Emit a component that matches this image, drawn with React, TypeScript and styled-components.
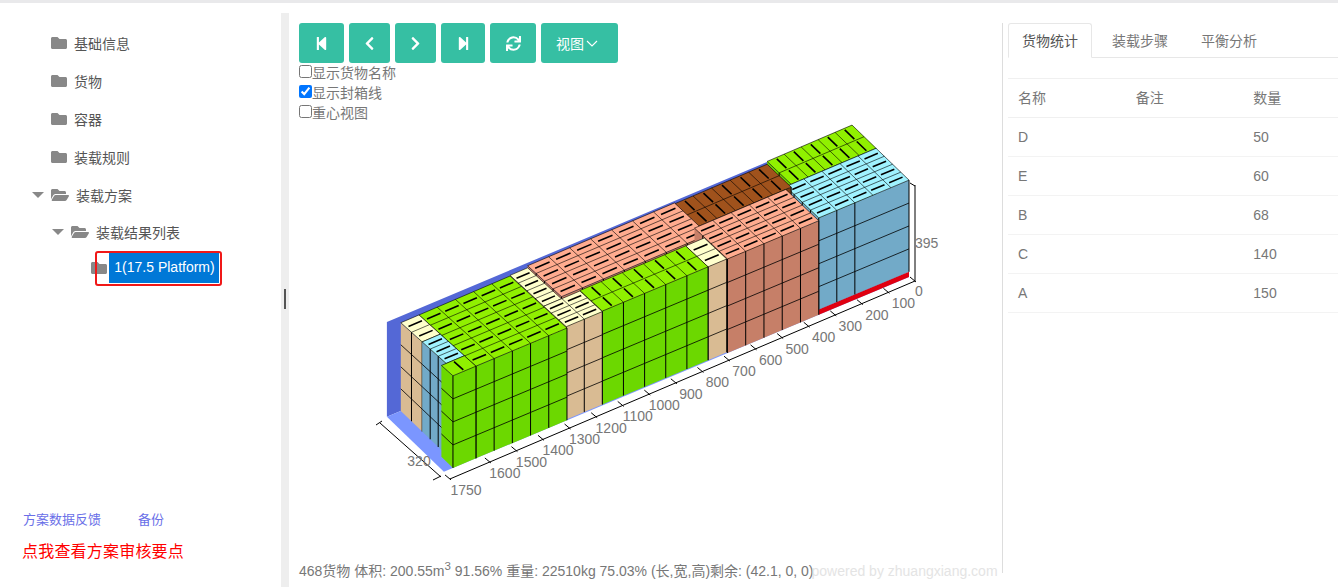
import React from "react";
import styled, { createGlobalStyle } from "styled-components";
import {
  FaChevronLeft,
  FaChevronRight,
  FaFolder,
  FaFolderOpen,
  FaStepBackward,
  FaStepForward,
  FaSync,
} from "react-icons/fa";

const GlobalStyle = createGlobalStyle`
  html, body { margin: 0; padding: 0; background: #fff; }
  body { font-family: "Liberation Sans", "Noto Sans CJK SC", sans-serif; color: #777; }
`;

const Page = styled.div`
  width: 1338px;
  height: 587px;
  overflow: hidden;
  display: flex;
  flex-direction: column;
`;
const TopStripe = styled.div`
  height: 3px;
  flex: none;
  background: #e9e9eb;
`;
const Body = styled.div`
  flex: 1;
  display: flex;
  min-height: 0;
`;
const Sidebar = styled.aside`
  width: 281px;
  flex: none;
  display: flex;
  flex-direction: column;
  padding-top: 21px;
  box-sizing: border-box;
`;
const Tree = styled.ul`
  list-style: none;
  margin: 0;
  padding: 0;
  flex: 1;
`;
const TreeRow = styled.li<{ $indent: number; $h: number }>`
  position: relative;
  height: ${(p) => p.$h}px;
  display: flex;
  align-items: center;
  padding-left: ${(p) => p.$indent}px;
  font-size: 14px;
  color: #555;
`;
const Caret = styled.span`
  width: 0;
  height: 0;
  border-left: 6px solid transparent;
  border-right: 6px solid transparent;
  border-top: 6px solid #888;
  margin-right: 7px;
`;
const FolderWrap = styled.span<{ $w: number }>`
  width: ${(p) => p.$w}px;
  display: inline-flex;
  color: #888;
  font-size: ${(p) => p.$w}px;
  margin-right: 7px;
`;
const SelectedLabel = styled.span`
  position: absolute;
  left: 109px;
  top: 4px;
  width: 110px;
  height: 30px;
  background: #0078d7;
  color: #fff;
  font-size: 14px;
  line-height: 29px;
  text-align: center;
  box-sizing: border-box;
  padding-left: 1px;
`;
const SelectedOutline = styled.span`
  position: absolute;
  left: 95px;
  top: 2px;
  width: 127px;
  height: 35px;
  border: 2.5px solid #f01818;
  border-radius: 3px;
  box-sizing: border-box;
`;
const Links = styled.div`
  display: flex;
  padding-left: 23px;
  gap: 37px;
  font-size: 13px;
  line-height: 16px;
  color: #6a6fe8;
`;
const AuditLink = styled.div`
  margin: 13px 0 24px 22px;
  font-size: 16px;
  letter-spacing: 0.2px;
  line-height: 22px;
  color: #f00;
`;
const Splitter = styled.div`
  width: 8px;
  flex: none;
  margin-top: 10px;
  background: #eee;
  display: flex;
  align-items: center;
  justify-content: center;
`;
const Grip = styled.div`
  width: 2px;
  height: 20px;
  margin-top: -2px;
  margin-left: -1px;
  background: #555;
`;
const Center = styled.main`
  width: 713px;
  flex: none;
  padding-top: 20px;
  box-sizing: border-box;
  display: flex;
  flex-direction: column;
`;
const Toolbar = styled.div`
  display: flex;
  gap: 5px;
  padding-left: 10px;
`;
const ToolButton = styled.button<{ $w: number; $text?: boolean }>`
  width: ${(p) => p.$w}px;
  height: 40px;
  border: none;
  border-radius: 3px;
  padding: 0 ${(p) => (p.$text ? 5 : 0)}px 0 0;
  background: #36bfa3;
  color: #fff;
  font-family: inherit;
  font-size: 14px;
  display: flex;
  align-items: center;
  justify-content: center;
  gap: 2px;
`;
const Checks = styled.div`
  display: flex;
  flex-direction: column;
  padding-left: 10px;
  margin-top: -1px;
  margin-bottom: 1px;
`;
const CheckRow = styled.label`
  height: 20px;
  display: flex;
  align-items: center;
  font-size: 14px;
  color: #777;
`;
const CheckInput = styled.input`
  width: 13px;
  height: 13px;
  margin: 0 0 1px;
  accent-color: #0075ff;
`;
const Chart = styled.svg`
  display: block;
  width: 713px;
  height: 438px;
  flex: none;
`;
const AxisText = styled.text`
  font-family: "Liberation Sans", sans-serif;
  font-size: 14px;
  fill: #777;
`;
const Status = styled.div`
  height: 20px;
  line-height: 20px;
  padding-left: 10px;
  font-size: 14px;
  color: #777;
  white-space: nowrap;
  sup {
    font-size: 11.5px;
    line-height: 0;
  }
`;
const Watermark = styled.span`
  color: #e4e4e4;
  margin-left: -2px;
`;
const Side = styled.section`
  flex: 1;
  margin-top: 20px;
  margin-bottom: 14px;
  border-left: 1px solid #ddd;
  padding-left: 5px;
  min-width: 0;
  overflow: hidden;
`;
const Tabs = styled.div`
  height: 35px;
  display: flex;
  border-bottom: 1px solid #e7e7e7;
  box-sizing: border-box;
`;
const Tab = styled.div<{ $active?: boolean }>`
  height: 35px;
  padding: 0 13px;
  flex: none;
  margin-right: ${(p) => (p.$active ? 6 : 5)}px;
  font-size: 14px;
  line-height: 34px;
  color: ${(p) => (p.$active ? "#555" : "#777")};
  box-sizing: border-box;
  border: 1px solid ${(p) => (p.$active ? "#e7e7e7" : "transparent")};
  border-bottom: 1px solid ${(p) => (p.$active ? "#fff" : "transparent")};
  border-radius: 3px 3px 0 0;
`;
const Table = styled.table`
  margin-top: 20px;
  width: 353px;
  border-collapse: collapse;
  table-layout: fixed;
  font-size: 14px;
  color: #777;
`;
const Th = styled.th`
  height: 39px;
  box-sizing: border-box;
  border-top: 1px solid #f0f0f0;
  border-bottom: 1px solid #f0f0f0;
  text-align: left;
  font-weight: 400;
  font-size: 14px;
  padding: 0 0 2px 10px;
`;
const Td = styled.td`
  height: 39px;
  box-sizing: border-box;
  border-bottom: 1px solid #f3f3f3;
  padding: 0 0 0 10px;
`;

/* ---------- projection of the loading scene ---------- */
type Pt = [number, number];
const P = (l: number, w: number, h: number): Pt => [
  909 - 0.267 * l - 0.178 * w,
  277 + 0.1118 * l - 0.172 * w - 0.2363 * h + (0.0125 * w * (l / 1700) * h) / 390,
];
const pts = (a: Pt[]) => a.map((p) => p.map((n) => n.toFixed(1)).join(",")).join(" ");

type Block = {
  l: [number, number, number];
  w: [number, number, number];
  h: [number, number, number];
  top: string;
  front: string;
  end: string;
  mark?: "l" | "w";
  skipFront?: number[];
  noFrontLines?: boolean;
};

const GREEN = { top: "#90f000", front: "#6cd800", end: "#6cd800" };
const CREAM = { top: "#ffffcc", front: "#d9bb93", end: "#d9bb93" };
const BLUE = { top: "#a0f2ff", front: "#72aac8", end: "#72aac8" };
const SALMON = { top: "#ffac8f", front: "#c67f68", end: "#c67f68" };
const BROWN = { top: "#a0521c", front: "#7a3f15", end: "#7a3f15" };
const RED = { top: "#e00010", front: "#e00010", end: "#e00010" };

const blocks: Block[] = [
  { ...GREEN, l: [0, 318, 5], w: [185, 320, 2], h: [20, 410, 4], mark: "w" },
  { ...RED, l: [0, 338, 1], w: [0, 185, 1], h: [0, 22, 1], noFrontLines: true },
  { ...BLUE, l: [0, 338, 5], w: [0, 185, 4], h: [22, 410, 4], mark: "l", skipFront: [1, 2] },
  { ...BROWN, l: [318, 665, 5], w: [185, 320, 2], h: [0, 398, 4], mark: "w" },
  { ...SALMON, l: [665, 1215, 7], w: [130, 320, 4], h: [0, 402, 4], mark: "l" },
  { ...SALMON, l: [338, 680, 5], w: [0, 185, 4], h: [0, 398, 4], mark: "l" },
  { ...CREAM, l: [680, 750, 1], w: [4, 130, 2], h: [0, 395, 4], mark: "l" },
  { ...GREEN, l: [750, 1146, 5], w: [4, 130, 2], h: [0, 395, 4], mark: "w" },
  { ...CREAM, l: [1215, 1281, 1], w: [130, 320, 4], h: [0, 393, 4], mark: "l" },
  { ...CREAM, l: [1146, 1281, 2], w: [4, 130, 3], h: [0, 393, 4], mark: "l" },
  { ...GREEN, l: [1281, 1622, 5], w: [0, 320, 5], h: [0, 390, 4], mark: "l" },
  { ...CREAM, l: [1622, 1690, 1], w: [200, 320, 2], h: [0, 390, 4], mark: "l" },
  { ...BLUE, l: [1622, 1690, 1], w: [65, 200, 3], h: [0, 390, 4], mark: "l" },
  { ...GREEN, l: [1622, 1708, 1], w: [0, 65, 1], h: [0, 390, 4], mark: "w" },
];

const steps = ([a, b, n]: [number, number, number]) =>
  Array.from({ length: n + 1 }, (_, i) => a + ((b - a) * i) / n);

const Seg = ({ a, b, sw = 1 }: { a: Pt; b: Pt; sw?: number }) => (
  <line x1={a[0]} y1={a[1]} x2={b[0]} y2={b[1]} stroke="#000" strokeWidth={sw} />
);

const BlockView = ({ b }: { b: Block }) => {
  const ls = steps(b.l);
  const ws = steps(b.w);
  const hs = steps(b.h);
  const [l0, l1] = [b.l[0], b.l[1]];
  const [w0, w1] = [b.w[0], b.w[1]];
  const [h0, h1] = [b.h[0], b.h[1]];
  const lines = !b.noFrontLines;
  return (
    <g>
      <polygon points={pts([P(l1, w0, h0), P(l1, w1, h0), P(l1, w1, h1), P(l1, w0, h1)])} fill={b.end} />
      <polygon points={pts([P(l0, w0, h0), P(l1, w0, h0), P(l1, w0, h1), P(l0, w0, h1)])} fill={b.front} />
      <polygon points={pts([P(l0, w0, h1), P(l1, w0, h1), P(l1, w1, h1), P(l0, w1, h1)])} fill={b.top} />
      {lines && hs.slice(1, -1).map((h) => <Seg key={`fh${h}`} a={P(l0, w0, h)} b={P(l1, w0, h)} sw={0.8} />)}
      {lines && hs.slice(1, -1).map((h) => <Seg key={`eh${h}`} a={P(l1, w0, h)} b={P(l1, w1, h)} sw={0.8} />)}
      {lines &&
        ls.map((l, i) =>
          b.skipFront?.includes(i) || i === 0 ? null : <Seg key={`fv${l}`} a={P(l, w0, h0)} b={P(l, w0, h1)} sw={1} />,
        )}
      {lines && <Seg a={P(l0, w0, h0)} b={P(l0, w0, h1)} sw={1} />}
      {lines && ws.slice(1, -1).map((w) => <Seg key={`ev${w}`} a={P(l1, w, h0)} b={P(l1, w, h1)} sw={1} />)}
      {lines && ls.map((l) => <Seg key={`tl${l}`} a={P(l, w0, h1)} b={P(l, w1, h1)} sw={0.6} />)}
      {lines && ws.map((w) => <Seg key={`tw${w}`} a={P(l0, w, h1)} b={P(l1, w, h1)} sw={0.6} />)}
      {b.mark &&
        ls.slice(0, -1).flatMap((l, i) =>
          ws.slice(0, -1).map((w, j) => {
            const cl = (l + ls[i + 1]) / 2;
            const cw = (w + ws[j + 1]) / 2;
            const dl = Math.min((ls[i + 1] - l) * 0.37, 27);
            const dw = Math.min((ws[j + 1] - w) * 0.4, 27);
            return b.mark === "l" ? (
              <Seg key={`m${i}-${j}`} a={P(cl - dl, cw, h1)} b={P(cl + dl, cw, h1)} sw={1.6} />
            ) : (
              <Seg key={`m${i}-${j}`} a={P(cl, cw - dw, h1)} b={P(cl, cw + dw, h1)} sw={1.6} />
            );
          }),
        )}
    </g>
  );
};

const AX = (l: number): Pt => [915 - 0.2657 * l, 281 + 0.1131 * l];
const ticks = [...Array.from({ length: 17 }, (_, i) => i * 100), 1750];

const Scene = () => (
  <Chart viewBox="289 123 713 438">
    <polygon points={pts([P(0, 320, 0), P(1742, 320, 0), P(1742, 320, 419), P(318, 320, 408), P(0, 320, 408)])} fill="#5468d6" />
    <polygon points={pts([P(0, 0, 0), P(1742, 0, 0), P(1742, 320, 0), P(0, 320, 0)])} fill="#7b96ff" />
    {blocks.map((b, i) => (
      <BlockView key={i} b={b} />
    ))}

    <Seg a={AX(0)} b={AX(1750)} />
    {ticks.map((t) => {
      const [x, y] = AX(t);
      return <Seg key={t} a={[x - 5, y - 4]} b={[x + 1, y + 1]} />;
    })}
    {ticks
      .filter((t) => t !== 0)
      .map((t) => {
        const [x, y] = AX(t);
        return (
          <AxisText key={t} x={x + (t === 1750 ? 16 : 15)} y={y + 16} textAnchor="middle">
            {t}
          </AxisText>
        );
      })}
    <AxisText x={915} y={296}>0</AxisText>

    <Seg a={[380, 423]} b={[441, 477]} />
    <Seg a={[376, 425]} b={[382, 421]} />
    <Seg a={[433, 480]} b={[441, 476]} />
    <AxisText x={419} y={466} textAnchor="middle">320</AxisText>

    <Seg a={[915, 185]} b={[915, 281]} />
    <Seg a={[910, 183]} b={[915, 186]} />
    <AxisText x={915} y={248}>395</AxisText>
  </Chart>
);

const rows = [
  ["D", "50"],
  ["E", "60"],
  ["B", "68"],
  ["C", "140"],
  ["A", "150"],
];

export default function App() {
  return (
    <Page>
      <GlobalStyle />
      <TopStripe />
      <Body>
        <Sidebar>
          <Tree>
            {["基础信息", "货物", "容器", "装载规则"].map((t) => (
              <TreeRow key={t} $indent={51} $h={38}>
                <FolderWrap $w={16}><FaFolder /></FolderWrap>
                {t}
              </TreeRow>
            ))}
            <TreeRow $indent={32} $h={38}>
              <Caret />
              <FolderWrap $w={18}><FaFolderOpen /></FolderWrap>
              装载方案
            </TreeRow>
            <TreeRow $indent={52} $h={35}>
              <Caret />
              <FolderWrap $w={18}><FaFolderOpen /></FolderWrap>
              装载结果列表
            </TreeRow>
            <TreeRow $indent={91} $h={38}>
              <FolderWrap $w={16}><FaFolder /></FolderWrap>
              <SelectedLabel>1(17.5 Platform)</SelectedLabel>
              <SelectedOutline />
            </TreeRow>
          </Tree>
          <Links>
            <span>方案数据反馈</span>
            <span>备份</span>
          </Links>
          <AuditLink>点我查看方案审核要点</AuditLink>
        </Sidebar>
        <Splitter>
          <Grip />
        </Splitter>
        <Center>
          <Toolbar>
            <ToolButton $w={45}><FaStepBackward size={15} /></ToolButton>
            <ToolButton $w={41}><FaChevronLeft size={15} /></ToolButton>
            <ToolButton $w={41}><FaChevronRight size={15} /></ToolButton>
            <ToolButton $w={44}><FaStepForward size={15} /></ToolButton>
            <ToolButton $w={46}><FaSync size={15} /></ToolButton>
            <ToolButton $w={77} $text>
              视图
              <svg width="12" height="7" viewBox="0 0 12 7" fill="none" stroke="#fff" strokeWidth="1.1">
                <path d="M1 1l5 5 5-5" />
              </svg>
            </ToolButton>
          </Toolbar>
          <Checks>
            <CheckRow><CheckInput type="checkbox" readOnly />显示货物名称</CheckRow>
            <CheckRow><CheckInput type="checkbox" checked readOnly />显示封箱线</CheckRow>
            <CheckRow><CheckInput type="checkbox" readOnly />重心视图</CheckRow>
          </Checks>
          <Scene />
          <Status>
            468货物 体积: 200.55m<sup>3</sup> 91.56% 重量: 22510kg 75.03% (长,宽,高)剩余: (42.1, 0, 0)
            <Watermark>powered by zhuangxiang.com</Watermark>
          </Status>
        </Center>
        <Side>
          <Tabs>
            <Tab $active>货物统计</Tab>
            <Tab>装载步骤</Tab>
            <Tab>平衡分析</Tab>
          </Tabs>
          <Table>
            <thead>
              <tr>
                <Th>名称</Th>
                <Th>备注</Th>
                <Th>数量</Th>
              </tr>
            </thead>
            <tbody>
              {rows.map(([n, q]) => (
                <tr key={n}>
                  <Td>{n}</Td>
                  <Td />
                  <Td>{q}</Td>
                </tr>
              ))}
            </tbody>
          </Table>
        </Side>
      </Body>
    </Page>
  );
}
